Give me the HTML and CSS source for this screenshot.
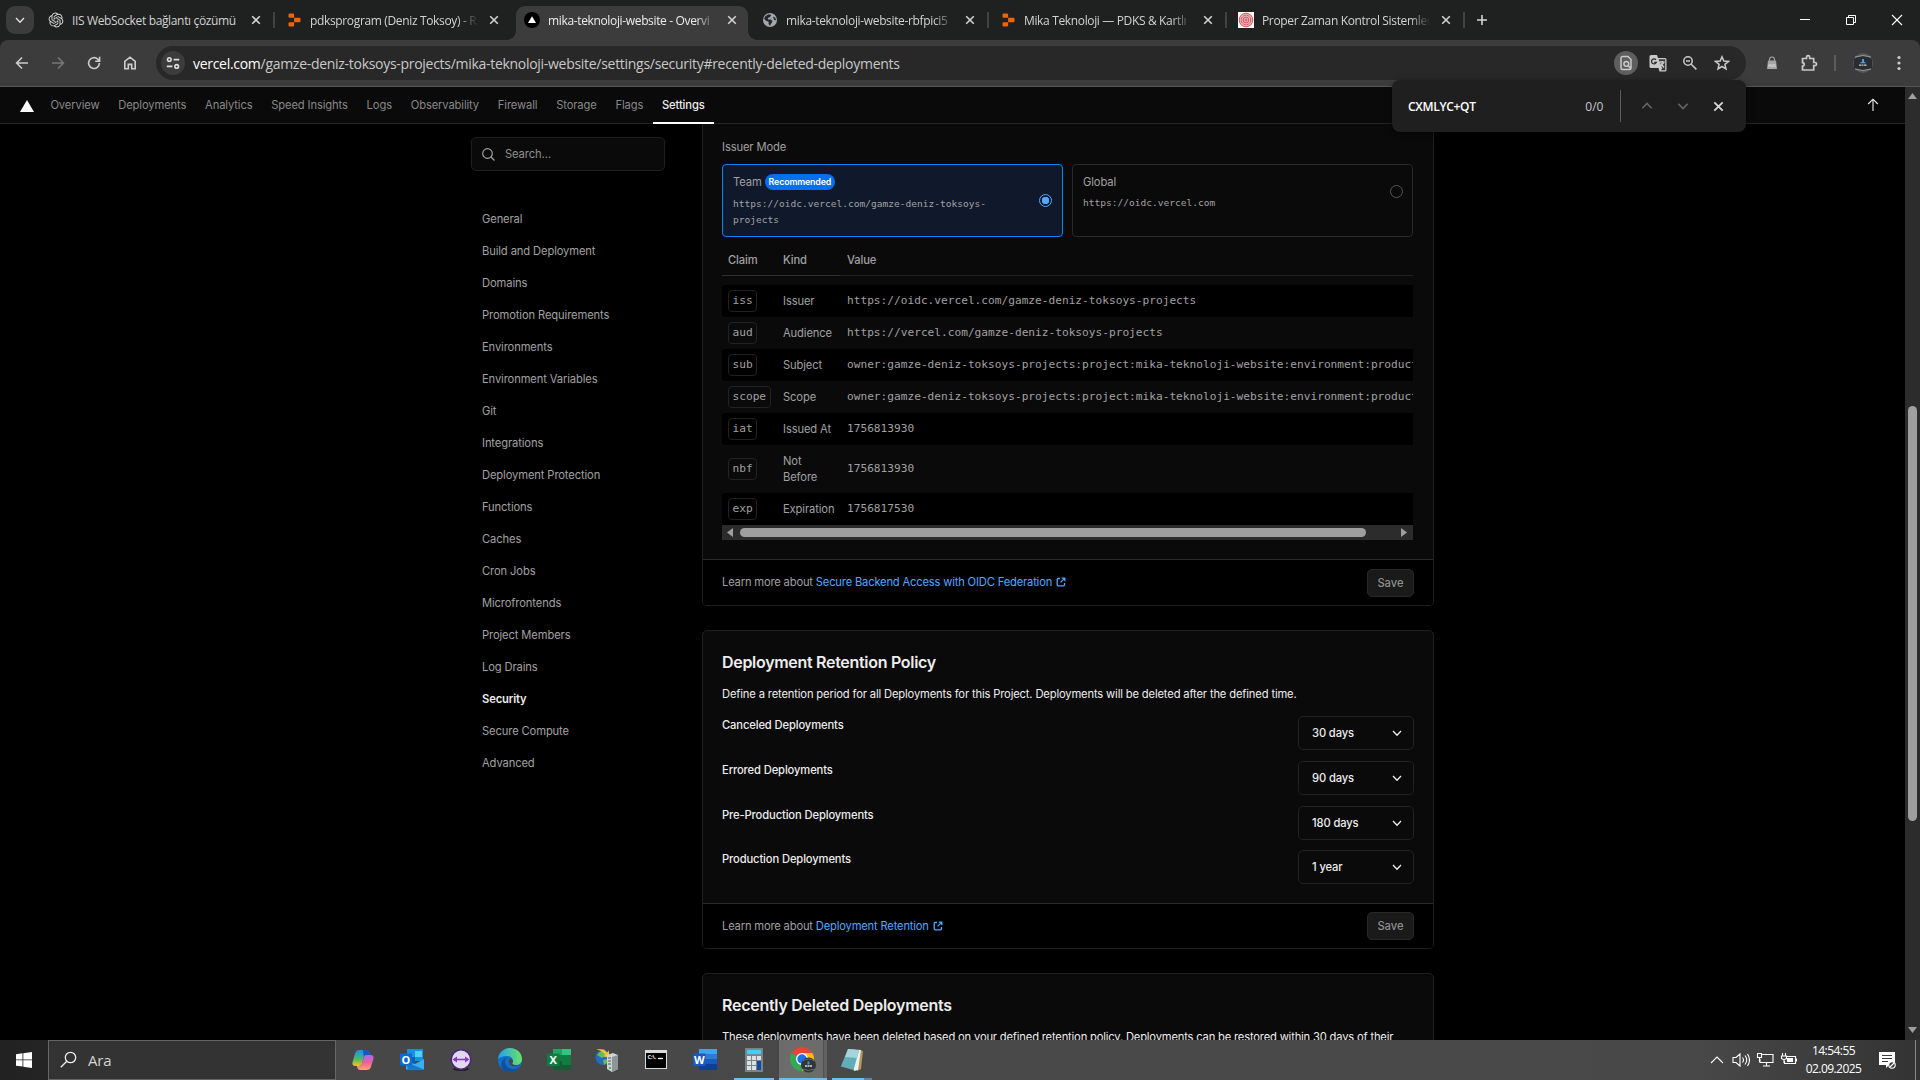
FILE: index.html
```html
<!DOCTYPE html>
<html lang="tr">
<head>
<meta charset="utf-8">
<title>mika-teknoloji-website - Overview</title>
<link rel="stylesheet" href="styles.css">
</head>
<body>
<svg class="defs" aria-hidden="true">
  <symbol id="close" viewBox="0 0 10 10"><path d="M1.2 1.2 8.8 8.8M8.8 1.2 1.2 8.8" fill="none" stroke="currentColor" stroke-width="1.6"/></symbol>
  <symbol id="chev" viewBox="0 0 12 12"><path d="M2 4 6 8.2 10 4" fill="none" stroke="currentColor" stroke-width="1.3"/></symbol>
  <symbol id="replit" viewBox="0 0 14 16"><path d="M2 1.5h3.6a1 1 0 0 1 1 1v3.2H2a1 1 0 0 1-1-1V2.5a1 1 0 0 1 1-1zM6.6 5.7h5.4a1 1 0 0 1 1 1v2.6a1 1 0 0 1-1 1H6.6zM2 10.3h4.6v3.2a1 1 0 0 1-1 1H2a1 1 0 0 1-1-1v-2.2a1 1 0 0 1 1-1z" fill="#f26207"/></symbol>
  <symbol id="ext" viewBox="0 0 10 10"><path d="M4 1.5H2.2a1 1 0 0 0-1 1v5.3a1 1 0 0 0 1 1h5.3a1 1 0 0 0 1-1V6M5.8 1.2h3v3M8.6 1.4 4.6 5.4" fill="none" stroke="currentColor" stroke-width="1.3"/></symbol>
</svg>

<header class="tabstrip">
  <button class="tab-search"><svg width="12" height="12"><use href="#chev"/></svg></button>
  <div class="tab">
    <svg class="fav" viewBox="-1 -1 26 26"><path fill="#d8d8d8" d="M22.2819 9.8211a5.9847 5.9847 0 0 0-.5157-4.9108 6.0462 6.0462 0 0 0-6.5098-2.9A6.0651 6.0651 0 0 0 4.9807 4.1818a5.9847 5.9847 0 0 0-3.9977 2.9 6.0462 6.0462 0 0 0 .7427 7.0966 5.98 5.98 0 0 0 .511 4.9107 6.051 6.051 0 0 0 6.5146 2.9001A5.9847 5.9847 0 0 0 13.2599 24a6.0557 6.0557 0 0 0 5.7718-4.2058 5.9894 5.9894 0 0 0 3.9977-2.9001 6.0557 6.0557 0 0 0-.7475-7.0729zm-9.022 12.6081a4.4755 4.4755 0 0 1-2.8764-1.0408l.1419-.0804 4.7783-2.7582a.7948.7948 0 0 0 .3927-.6813v-6.7369l2.02 1.1686a.071.071 0 0 1 .038.052v5.5826a4.504 4.504 0 0 1-4.4945 4.4944zm-9.6607-4.1254a4.4708 4.4708 0 0 1-.5346-3.0137l.142.0852 4.783 2.7582a.7712.7712 0 0 0 .7806 0l5.8428-3.3685v2.3324a.0804.0804 0 0 1-.0332.0615L9.74 19.9502a4.4992 4.4992 0 0 1-6.1408-1.6464zM2.3408 7.8956a4.485 4.485 0 0 1 2.3655-1.9728V11.6a.7664.7664 0 0 0 .3879.6765l5.8144 3.3543-2.0201 1.1685a.0757.0757 0 0 1-.071 0l-4.8303-2.7865A4.504 4.504 0 0 1 2.3408 7.872zm16.5963 3.8558L13.1038 8.364 15.1192 7.2a.0757.0757 0 0 1 .071 0l4.8303 2.7913a4.4944 4.4944 0 0 1-.6765 8.1042v-5.6772a.79.79 0 0 0-.407-.667zm2.0107-3.0231l-.142-.0852-4.7735-2.7818a.7759.7759 0 0 0-.7854 0L9.409 9.2297V6.8974a.0662.0662 0 0 1 .0284-.0615l4.8303-2.7866a4.4992 4.4992 0 0 1 6.6802 4.66zM8.3065 12.863l-2.02-1.1638a.0804.0804 0 0 1-.038-.0567V6.0742a4.4992 4.4992 0 0 1 7.3757-3.4537l-.142.0805L8.704 5.459a.7948.7948 0 0 0-.3927.6813zm1.0976-2.3654l2.602-1.4998 2.6069 1.4998v2.9994l-2.5974 1.4997-2.6067-1.4997Z"/></svg>
    <span class="tab-title t1">IIS WebSocket bağlantı çözümü</span><svg class="x"><use href="#close"/></svg>
  </div>
  <div class="tab nosep">
    <svg class="fav rep"><use href="#replit"/></svg>
    <span class="tab-title">pdksprogram (Deniz Toksoy) - R</span><svg class="x"><use href="#close"/></svg>
  </div>
  <div class="tab nosep active">
    <svg class="fav" viewBox="0 0 16 16"><circle cx="8" cy="8" r="8" fill="#000"/><path d="M8 4.2 12 11H4z" fill="#fff"/></svg>
    <span class="tab-title">mika-teknoloji-website - Overvi</span><svg class="x"><use href="#close"/></svg>
  </div>
  <div class="tab">
    <svg class="fav" viewBox="0 0 16 16"><circle cx="8" cy="8" r="7" fill="#a2a6ad"/><path d="M3 4.5 6.5 2.3 9.4 3 8 5 6 6v1.6h3l1.6 1.6L9.5 11 8 13.8 6.6 12V9.8L3.6 8.6 2.2 6.8zM11 4.6l2.4 1.2.6 2.4-2-.2z" fill="#26282b"/></svg>
    <span class="tab-title">mika-teknoloji-website-rbfpici5</span><svg class="x"><use href="#close"/></svg>
  </div>
  <div class="tab">
    <svg class="fav rep"><use href="#replit"/></svg>
    <span class="tab-title">Mika Teknoloji — PDKS &amp; Kartlı</span><svg class="x"><use href="#close"/></svg>
  </div>
  <div class="tab">
    <svg class="fav" viewBox="0 0 16 16"><path fill="#fff" d="M0 0h16v16H0z"/><circle cx="8" cy="8" r="6.8" fill="#eab6ba"/><g fill="none" stroke="#d6535f" stroke-width="1"><circle cx="8" cy="8" r="6.8"/><circle cx="8" cy="8" r="4.8" stroke-dasharray="3 .8"/><circle cx="8" cy="8" r="2.9"/><circle cx="8" cy="8" r="1"/></g></svg>
    <span class="tab-title">Proper Zaman Kontrol Sistemler</span><svg class="x"><use href="#close"/></svg>
  </div>
  <svg class="newtab" viewBox="0 0 12 12"><path d="M6 1v10M1 6h10" stroke="#d4d4d4" stroke-width="1.6"/></svg>
  <div class="window-controls">
    <svg viewBox="0 0 12 12"><path d="M1 5.5h10" stroke="#fff"/></svg>
    <svg viewBox="0 0 12 12"><path d="M1.5 3.5h7v7h-7zM3.5 3V1.5h7v7H9" fill="none" stroke="#fff"/></svg>
    <svg viewBox="0 0 12 12"><path d="M1 1l10 10M11 1 1 11" stroke="#fff" stroke-width="1.1"/></svg>
  </div>
</header>

<div class="toolbar">
  <nav class="nav-buttons">
    <svg viewBox="0 0 16 16"><path d="M14 8H3M8 2.5 2.6 8 8 13.5" /></svg>
    <svg viewBox="0 0 16 16" class="off"><path d="M2 8h11M8 2.5 13.4 8 8 13.5"/></svg>
    <svg viewBox="0 0 16 16"><path d="M13.4 8A5.4 5.4 0 1 1 11.8 4.2L13.4 6M13.6 1.8v4.4H9.2"/></svg>
    <svg viewBox="0 0 16 16"><path d="M2.8 6.4 8 2.2l5.2 4.2v7.4H9.7V9.4H6.3v4.4H2.8z"/></svg>
  </nav>
  <div class="omnibox">
    <span class="site-info"><svg viewBox="0 0 16 16" width="16" height="16" fill="none" stroke="#dedede" stroke-width="1.6"><circle cx="4.3" cy="4.6" r="1.8"/><path d="M8.6 4.6h5.6M1.8 11.4h5.6"/><circle cx="11.7" cy="11.4" r="1.8"/></svg></span>
    <span class="url"><b>vercel.com</b>/gamze-deniz-toksoys-projects/mika-teknoloji-website/settings/security#recently-deleted-deployments</span>
    <div class="omni-icons">
      <span class="round"><svg viewBox="0 0 16 16"><path d="M10 1.5H4.5a1.5 1.5 0 0 0-1.5 1.5v10A1.5 1.5 0 0 0 4.5 14.5h7A1.5 1.5 0 0 0 13 13V4.5zM10.3 10.8l2.2 2.4"/><circle cx="8.3" cy="8.8" r="2.4"/></svg></span>
      <svg viewBox="0 0 18 18" class="translate"><path fill="#c9c9c9" d="M2 1h6l1 3h7a1.5 1.5 0 0 1 1.5 1.5V16A1.5 1.5 0 0 1 16 17.5h-5.5L9.5 14H2A1.5 1.5 0 0 1 .5 12.5v-10A1.5 1.5 0 0 1 2 1z"/><path fill="#3a3a3a" d="M9.6 5.2H16.2v11H12l1.2-2z"/><path d="M7 5.8A2.5 2.5 0 1 0 7.4 8.3H5.2" fill="none" stroke="#282828" stroke-width="1.2"/><path d="M10.5 8h5M13 7v1.5M14.8 8.5 11.6 12M11.8 9.5l3.2 4" stroke="#c9c9c9" fill="none"/></svg>
      <svg viewBox="0 0 16 16"><circle cx="6" cy="6" r="4.2"/><path d="M9.2 9.2 14.4 14.4M4 6h4"/></svg>
      <svg viewBox="0 0 16 16"><path d="M8 1.8 9.8 6l4.7.4-3.6 3 1.1 4.6L8 11.5 4 14l1.1-4.6-3.600-3L6.2 6z"/></svg>
    </div>
  </div>
  <div class="extensions">
    <svg viewBox="0 0 12 14" class="lock"><path d="M3.500 4.500V3.500a2.500 2.500 0 0 1 5 0v1" fill="none" stroke="#a5a5a5" stroke-width="1.100"/><path d="M2 4.500h8l1 8.500H1z" fill="#a5a5a5"/><text x="6" y="10.500" text-anchor="middle" font-size="4" fill="#efefef">AVG</text></svg>
    <svg viewBox="0 0 18 18" class="puzzle"><path d="M2.500 4.500h4V3.200a1.600 1.600 0 0 1 3.200 0v1.300h4v4H15a1.600 1.600 0 0 1 0 3.200h-1.300v4.300H2.500v-4a1.700 1.700 0 0 0 0-3.400z" fill="none" stroke="#c9c9c9" stroke-width="1.700"/></svg>
    <i></i>
    <svg viewBox="0 0 20 20" class="avatar"><circle cx="10" cy="10" r="10" fill="#55585b"/><path d="M1 6Q10 0 19 6v9Q10 20 1 15z" fill="#292d31"/><path d="M2 4q8-3 16 0M2 16q8 3 16 0" stroke="#999" fill="none"/><path d="M9 6h2v3h1.500v1.300h-5V9H9z" fill="#4aa0dc"/><path d="M6 12.200h8" stroke="#ccc" stroke-width="1.300" stroke-dasharray="2 .5"/></svg>
    <svg viewBox="0 0 4 16" class="dots"><circle cx="2" cy="2.500" r="1.600"/><circle cx="2" cy="8" r="1.600"/><circle cx="2" cy="13.500" r="1.600"/></svg>
  </div>
</div>

<div class="viewport">
  <div class="page">
    <nav class="topnav">
      <svg class="logo" viewBox="0 0 14 12"><path d="M7 0 14 12H0z" fill="#fff"/></svg>
      <a>Overview</a><a>Deployments</a><a>Analytics</a><a>Speed Insights</a><a>Logs</a><a>Observability</a><a>Firewall</a><a>Storage</a><a>Flags</a><a class="current">Settings</a>
      <svg class="up" viewBox="0 0 12 14"><path d="M6 13V1.500M1.200 6 6 1.200 10.800 6" fill="none" stroke="#ededed" stroke-width="1.100"/></svg>
    </nav>
    <div class="content">
      <aside>
        <div class="search"><svg viewBox="0 0 13 13"><circle cx="5.500" cy="5.500" r="4.800"/><path d="m9 9 3.500 3.500"/></svg>Search…</div>
        <a>General</a><a>Build and Deployment</a><a>Domains</a><a>Promotion Requirements</a><a>Environments</a><a>Environment Variables</a><a>Git</a><a>Integrations</a><a>Deployment Protection</a><a>Functions</a><a>Caches</a><a>Cron Jobs</a><a>Microfrontends</a><a>Project Members</a><a>Log Drains</a><a class="current">Security</a><a>Secure Compute</a><a>Advanced</a>
      </aside>
      <main>
        <section class="card oidc">
          <div class="body">
            <div class="label">Issuer Mode</div>
            <div class="modes">
              <div class="mode on"><div><p>Team <span class="badge">Recommended</span></p><code>https://oidc.vercel.com/gamze-deniz-toksoys-<br>projects</code></div><i class="radio"></i></div>
              <div class="mode"><div><p>Global</p><code>https://oidc.vercel.com</code></div><i class="radio"></i></div>
            </div>
            <div class="claims">
              <div class="row head"><span>Claim</span><span>Kind</span><span>Value</span></div>
              <div class="row odd"><span><kbd>iss</kbd></span><span>Issuer</span><code>https://oidc.vercel.com/gamze-deniz-toksoys-projects</code></div>
              <div class="row"><span><kbd>aud</kbd></span><span>Audience</span><code>https://vercel.com/gamze-deniz-toksoys-projects</code></div>
              <div class="row odd"><span><kbd>sub</kbd></span><span>Subject</span><code>owner:gamze-deniz-toksoys-projects:project:mika-teknoloji-website:environment:product</code></div>
              <div class="row"><span><kbd>scope</kbd></span><span>Scope</span><code>owner:gamze-deniz-toksoys-projects:project:mika-teknoloji-website:environment:product</code></div>
              <div class="row odd"><span><kbd>iat</kbd></span><span>Issued At</span><code>1756813930</code></div>
              <div class="row tall"><span><kbd>nbf</kbd></span><span>Not<br>Before</span><code>1756813930</code></div>
              <div class="row odd"><span><kbd>exp</kbd></span><span>Expiration</span><code>1756817530</code></div>
              <div class="hscroll"><svg viewBox="0 0 6 9"><path d="M6 0v9L0 4.500z"/></svg><i></i><svg viewBox="0 0 6 9"><path d="M0 0v9l6-4.500z"/></svg></div>
            </div>
          </div>
          <footer><p>Learn more about <a>Secure Backend Access with OIDC Federation</a><svg><use href="#ext"/></svg></p><button>Save</button></footer>
        </section>
        <section class="card retention">
          <div class="body">
            <h2>Deployment Retention Policy</h2>
            <p class="desc">Define a retention period for all Deployments for this Project. Deployments will be deleted after the defined time.</p>
            <div class="policy"><b>Canceled Deployments</b><span class="select">30 days<svg><use href="#chev"/></svg></span></div>
            <div class="policy"><b>Errored Deployments</b><span class="select">90 days<svg><use href="#chev"/></svg></span></div>
            <div class="policy"><b>Pre-Production Deployments</b><span class="select">180 days<svg><use href="#chev"/></svg></span></div>
            <div class="policy"><b>Production Deployments</b><span class="select">1 year<svg><use href="#chev"/></svg></span></div>
          </div>
          <footer><p>Learn more about <a>Deployment Retention</a><svg><use href="#ext"/></svg></p><button>Save</button></footer>
        </section>
        <section class="card deleted">
          <div class="body">
            <h2>Recently Deleted Deployments</h2>
            <p class="desc">These deployments have been deleted based on your defined retention policy. Deployments can be restored within 30 days of their</p>
          </div>
        </section>
      </main>
    </div>
  </div>
  <div class="vscroll"><svg viewBox="0 0 9 6"><path d="M0 6h9L4.500 0z"/></svg><i></i><svg viewBox="0 0 9 6"><path d="M0 0h9L4.500 6z"/></svg></div>
</div>

<div class="findbar">
  <b>CXMLYC+QT</b><span>0/0</span><i></i>
  <svg class="dim flip"><use href="#chev"/></svg><svg class="dim"><use href="#chev"/></svg><svg><use href="#close"/></svg>
</div>

<footer class="taskbar">
  <div class="start"><svg viewBox="0 0 16 16" width="16" height="16"><path fill="#fff" d="M0 2.200 6.500 1.300V7.500H0zM7.300 1.200 16 0v7.500H7.300zM0 8.300h6.500v6.300L0 13.700zM7.300 8.300H16V16l-8.700-1.300z"/></svg></div>
  <div class="tsearch"><svg viewBox="0 0 17 17"><circle cx="10.500" cy="6.500" r="5.200"/><path d="M6.800 10.200.8 16.200"/></svg>Ara</div>
  <div class="apps">
    <span><svg viewBox="0 0 24 24"><defs><linearGradient id="c1" x1="0" y1="0" x2="0" y2="1"><stop offset="0" stop-color="#1c8ff0"/><stop offset=".55" stop-color="#49b86a"/><stop offset="1" stop-color="#f4c714"/></linearGradient><linearGradient id="c2" x1="0" y1="0" x2="0" y2="1"><stop offset="0" stop-color="#a56bee"/><stop offset=".5" stop-color="#ee5fa0"/><stop offset="1" stop-color="#fda65c"/></linearGradient></defs><path d="M8 2h7.500q2 0 2.700 2.200L19 7h-3.500q-2 0-2.600 2L11 15.500Q10.300 18 8 18H4.500Q.6 18 1.600 14L4 5.500Q5 2 8 2z" fill="url(#c1)"/><path d="M12 2h3.500q2 0 2.700 2.200L19 7h-3.500q-2 0-2.600 2z" fill="#1457c8"/><path d="M16 22H9q-2 0-2.600-2L5.800 18H8q2.300 0 3-2.500L13 9q.6-2 2.600-2h4q3.800 0 2.800 4l-2.500 8q-1 3-3.900 3z" fill="url(#c2)"/></svg></span>
    <span><svg viewBox="0 0 24 24"><path fill="#1a8fe0" d="M7 1h16v12H7z"/><path fill="#50d0ff" d="M15 3h7v6h-7z"/><path fill="#0a62b8" d="M7 9h8v8H7z"/><path fill="#38b0f0" d="M6 21.500V14l9 2 9-5v10.500z"/><path fill="#1278d0" d="M6 14l18 7.500H8z"/><path fill="#0b6ccd" d="M0 5.500h12v12H0z"/><text x="6" y="15.500" class="office">O</text></svg></span>
    <span><svg viewBox="0 0 24 24"><ellipse cx="12" cy="21" rx="8" ry="2" fill="#222"/><circle cx="12" cy="11.500" r="9.800" fill="#e1d9ed" stroke="#4a2b75" stroke-width="1.600"/><path d="M3.500 11.500 8 8.500v2.200h8V8.500l4.500 3-4.500 3v-2.200H8v2.200z" fill="#8a35c8"/></svg></span>
    <span><svg viewBox="0 0 24 24"><defs><linearGradient id="e1"><stop offset="0" stop-color="#22a0e8"/><stop offset="1" stop-color="#6be265"/></linearGradient></defs><circle cx="12" cy="12" r="12" fill="#0d70c9"/><path d="M0 11C1 4 6 0 12 0c7 0 12 5 12 11 0 4-3 6-6.500 6-3 0-4-1-3-2.300C15.800 12 14 8 9 8 4 8 1 10 0 11z" fill="url(#e1)"/><path d="M9 9.500C5 12 7 20 14 21c4 .5 7-1.500 8.300-4C19 25 10 26 5.500 22 1 18 4 10 9 9.500z" fill="#144f9b"/><path d="M12.500 10.500c-3 2-2 6 1.500 7.500 3 1 6 .3 8.500-1-4 1-9.500 0-8-2.500 1-1.500 0-3.500-2-4z" fill="#474747"/></svg></span>
    <span><svg viewBox="0 0 24 24"><path fill="#21a366" d="M6 1h18v7H6z"/><path fill="#33c481" d="M15 1h9v6h-9z"/><path fill="#107c41" d="M6 7h18v10H6z"/><path fill="#185c37" d="M6 13h18v9H6z"/><path fill="#107c41" d="M15 12h9v5h-9zM0 5.500h12.500V18H0z"/><text x="6.200" y="15.800" class="office">X</text></svg></span>
    <span><svg viewBox="0 0 24 24"><circle cx="8" cy="9.500" r="7.500" fill="#246bc4"/><path d="M2 7q4-5 7-4l1 4-3 3zM8 12l4-1v4l-3 2z" fill="#64bc54"/><path d="M1 1l8 .5 3 3 2-2v7L8 8.500 10 6.500 6 3z" fill="#f2c43c"/><path d="m12 7 6-2 5 2v14l-6 3-5-3z" fill="#cfd3d5"/><path d="m17 9 6-2v14l-6 3z" fill="#8f9597"/><path d="M13 10h3M13 13h3M13 16h3" stroke="#555"/><path d="M14 20h2" stroke="#49bd43" stroke-width="2"/></svg></span>
    <span><svg viewBox="0 0 24 24"><path fill="#dadada" d="M1 2h22v19H1z"/><path fill="#000" d="M2 5h20v15H2z"/><text x="3.500" y="11" font-size="5.500" font-weight="bold" fill="#fff">C:\.</text><path d="M14 10.500h5" stroke="#fff" stroke-width="1.300"/></svg></span>
    <span><svg viewBox="0 0 24 24"><path fill="#41a5ee" d="M6 1h18v6H6z"/><path fill="#2b7cd3" d="M6 6h18v6H6z"/><path fill="#185abd" d="M6 11h18v6H6z"/><path fill="#103f91" d="M6 16h18v6H6z"/><path fill="#185abd" d="M0 5.500h12.500V18H0z"/><text x="6.200" y="15.600" class="office">W</text></svg></span>
    <span class="open"><svg viewBox="0 0 24 24"><path fill="#7a8288" d="M3 0h18v24H3z"/><path fill="#41d0f4" d="M5 1.800h14v4.400H5z"/><path fill="#dce1e4" d="M5 8h4v4H5zM10 8h4v4h-4zM15 8h4v4h-4zM5 13h4v4H5zM10 13h4v4h-4zM5 18h4v4H5zM10 18h4v4h-4z"/><path fill="#0c4c9c" d="M15 13h4v9h-4z"/></svg></span>
    <span class="open chrome"><svg viewBox="0 0 26 26"><path d="M12 12 1.600 6A12 12 0 0 1 22.400 6z" fill="#ea4335"/><path d="M12 6h10.400A12 12 0 0 1 12 24z" fill="#fbbc04"/><path d="M12 12v12A12 12 0 0 1 1.600 6z" fill="#34a853"/><circle cx="12" cy="12" r="6" fill="#fff"/><circle cx="12" cy="12" r="4.700" fill="#1a73e8"/><circle cx="18.500" cy="18" r="7.500" fill="#30353a"/><path d="M12.500 14q6-4 12 0M12.500 22q6 3 12 0" stroke="#65696c" fill="none"/><path d="M17.500 14.500h2v3h-2z" fill="#448fc4"/><path d="M15 19h7" stroke="#ddd" stroke-width="1.300" stroke-dasharray="2 .5"/></svg></span>
    <span class="open stack"><svg viewBox="0 0 24 24"><path d="m20 2 3 1-2 18-4 2z" fill="#b69758"/><path d="m8 1 13 1-3 20-4 1z" fill="#e9f1f2"/><path d="M8 1 19 2.500 13.500 22 .8 18.500z" fill="#63adb9"/><path d="M8 1 19 2.500 17 10 5 9z" fill="#a5d4da"/></svg></span>
  </div>
  <div class="tray">
    <svg viewBox="0 0 14 16" class="w14"><path d="M1 11 7 5l6 6"/></svg>
    <svg viewBox="0 0 18 16" class="w18"><path d="M1 5.500h3L8 2v12l-4-3.500H1zM10.500 5.500q2 2.500 0 5M13 3.500q3.500 4.500 0 9M15.500 2q4 6 0 12"/></svg>
    <svg viewBox="0 0 18 16" class="w18"><path d="M6 2.500h11v8H4V7M10.500 10.500V14M7 14h7M1.500 1.500h4v4h-4zM3.500 5.500V10"/></svg>
    <svg viewBox="0 0 18 16" class="w18"><path d="M7 4.500h8.500v7H4.500V9M16.500 6.500v3M2.500 1v3M5.500 1v3M1.500 4h5v2.500q-2.500 2-5 0zM4 8v3"/><path d="M7.500 6.500h5v3h-5z" fill="#fff"/></svg>
    <div class="clock"><span>14:54:55</span><span>02.09.2025</span></div>
    <svg viewBox="0 0 18 18" class="action"><path fill="#fff" stroke="none" d="M1 1h16v13h-6l-3 3v-3H1z"/><path d="M4 4.500h10M4 7.500h10M4 10.500h6" stroke="#3c3c3c"/><circle cx="14" cy="14" r="3.200" fill="#3c3c3c"/><path d="m12 16 4-4"/></svg>
    <i></i>
  </div>
</footer>
</body>
</html>
```
FILE: styles.css
```css
* { box-sizing: border-box; margin: 0; padding: 0; }
body { width: 1920px; height: 1080px; overflow: hidden; background: #000; display: flex; flex-direction: column; font-family: Inter, "Liberation Sans", sans-serif; font-size: 11.2px; color: #a1a1a1; }
button { font: inherit; border: 0; }
svg { flex: none; display: block; }
.defs { position: absolute; width: 0; height: 0; }
code, kbd { font-family: "DejaVu Sans Mono", monospace; letter-spacing: 0; }

/* browser tabs */
.tabstrip { height: 40px; flex: none; display: flex; align-items: center; background: #1f2120; padding-left: 6px; font: 12px "Open Sans", sans-serif; color: #d2d2d2; }
.tab-search { width: 28px; height: 28px; border-radius: 9px; background: #3c3c3c; color: #e4e4e4; display: flex; align-items: center; justify-content: center; margin-right: 3px; }
.tab { width: 238px; height: 34px; display: flex; align-items: center; padding-left: 11px; position: relative; }
.tab::after { content: ""; position: absolute; right: 0; top: 9px; width: 2px; height: 16px; background: #414342; }
.tab.nosep::after { display: none; }
.fav { width: 16px; height: 16px; margin-right: 8px; }
.rep { padding-left: 1px; }
.tab-title { width: 168px; overflow: hidden; white-space: nowrap; height: 20px; line-height: 20px; letter-spacing: -.35px; margin-top: 1px; -webkit-mask-image: linear-gradient(90deg, #000 148px, transparent 168px); mask-image: linear-gradient(90deg, #000 148px, transparent 168px); }
.t1 { -webkit-mask-image: none; mask-image: none; }
.x { width: 10px; height: 10px; margin-left: 11px; color: #d2d2d2; }
.active { background: #3c3c3c; border-radius: 9px 9px 0 0; width: 232px; height: 34px; margin: 6px 3px 0 3px; align-self: flex-end; padding: 0 0 6px 8px; color: #ececec; }
.active::before { content: ""; position: absolute; left: -9px; right: -9px; bottom: 0; height: 9px; background: radial-gradient(circle at 0 0, transparent 8.500px, #3c3c3c 9px) left / 9px 9px no-repeat, radial-gradient(circle at 100% 0, transparent 8.500px, #3c3c3c 9px) right / 9px 9px no-repeat; }
.newtab { width: 12px; height: 12px; margin-left: 11px; }
.window-controls { margin-left: auto; display: flex; gap: 34px; padding-right: 17px; }
.window-controls svg { width: 12px; height: 12px; }

/* browser toolbar */
.toolbar { height: 47px; flex: none; background: #3c3c3c; border-bottom: 1px solid #555; border-radius: 8px 8px 0 0; display: flex; align-items: center; box-shadow: 0 -8px #1f2120; clip-path: inset(0); padding-left: 14px; }
.nav-buttons { display: flex; gap: 20px; }
.nav-buttons svg { width: 16px; height: 16px; fill: none; stroke: #cdcdcd; stroke-width: 1.600; }
.nav-buttons .off { stroke: #777; }
.omnibox { width: 1590px; height: 34px; border-radius: 17px; background: #282828; margin-left: 18px; display: flex; align-items: center; padding-left: 5px; }
.site-info, .round { width: 24px; height: 24px; border-radius: 50%; background: #3c3c3c; display: flex; align-items: center; justify-content: center; }
.url { margin-left: 8px; font: 14px "Open Sans", sans-serif; letter-spacing: -.29px; color: #c8c8c8; white-space: nowrap; }
.url b { font-weight: 400; color: #fff; }
.omni-icons { margin-left: auto; padding-right: 16px; display: flex; align-items: center; gap: 16px; }
.omni-icons svg { width: 16px; height: 16px; fill: none; stroke: #c9c9c9; stroke-width: 1.500; }
.omni-icons .translate { width: 18px; height: 18px; stroke: none; margin-left: -5px; margin-right: -1px; }
.round { background: #5e5e5e; }
.extensions { display: flex; align-items: center; flex: 1; padding-left: 20px; }
.lock { width: 12px; height: 14px; }
.puzzle { width: 18px; height: 18px; margin-left: 22px; }
.extensions i { width: 2px; height: 16px; background: #5c5c5c; margin-left: 16px; }
.avatar { width: 20px; height: 20px; margin-left: 17px; }
.dots { width: 4px; height: 16px; fill: #cdcdcd; margin-left: 24px; }

/* page area */
.viewport { height: 953px; flex: none; display: flex; }
.page { width: 1905px; overflow: hidden; display: flex; flex-direction: column; letter-spacing: -.12px; }
.topnav { height: 37px; flex: none; background: #0a0a0a; border-bottom: 1px solid #242424; display: flex; align-items: center; padding-left: 20px; color: #888; }
.logo { width: 14px; height: 12px; margin-right: 7px; margin-top: 2px; }
.topnav a { height: 37px; padding: 0 9.350px 0 9.450px; line-height: 37px; }
.topnav .current { color: #ededed; font-weight: 500; box-shadow: inset 0 -2px #fff; }
.up { width: 12px; height: 14px; margin-left: auto; margin-right: 26px; }
.content { display: flex; padding-left: 471px; }
aside { width: 194px; padding-top: 13px; display: flex; flex-direction: column; flex: none; }
.search { height: 34px; border: 1px solid #1f1f1f; border-radius: 5px; background: #0a0a0a; color: #8f8f8f; display: flex; align-items: center; gap: 10px; padding-left: 10px; margin-bottom: 32px; }
.search svg { width: 13px; height: 13px; fill: none; stroke: #a1a1a1; stroke-width: 1.200; }
aside a { height: 32px; line-height: 32px; padding-left: 11px; }
aside .current { color: #ededed; font-weight: 600; }
main { width: 732px; margin-left: 37px; flex: none; }
.card { border: 1px solid #1f1f1f; border-radius: 5px; background: #0a0a0a; overflow: hidden; margin-bottom: 24px; }
.card .body { padding: 0 19px; }
.oidc { border-top: 0; border-radius: 0 0 5px 5px; }
.oidc .body { height: 435px; padding-top: 15px; padding-right: 20px; }
.label { height: 16px; line-height: 16px; }
.modes { display: grid; grid-template-columns: 1fr 1fr; gap: 9px; margin-top: 9px; }
.mode { height: 73px; border: 1px solid #2a2a2a; border-radius: 4px; padding: 8px 10px; display: flex; justify-content: space-between; }
.mode p { line-height: 16px; height: 18px; display: flex; align-items: center; gap: 3px; }
.mode code { font-size: 9.550px; line-height: 16px; display: block; margin-top: 4px; }
.mode.on { background: #10192c; border-color: #0a85f5; }
.mode.on code { margin-top: 5px; }
.badge { height: 16px; border-radius: 8px; background: #0070f3; color: #fff; font-weight: 600; font-size: 8.800px; padding: 0 4px; line-height: 16px; }
.radio { width: 13px; height: 13px; border: 1px solid #555; border-radius: 50%; margin: 12px -1px 0 0; }
.on .radio { border-color: #52a8ff; background: radial-gradient(circle, #52a8ff 3.500px, transparent 4px); margin: 21px 0 0; }
.claims { overflow: hidden; padding-top: 7px; }
.row { height: 32px; display: grid; grid-template-columns: 55px 64px 1fr; align-items: center; padding-left: 6px; white-space: nowrap; line-height: 16px; border-radius: 3px 0 0 3px; }
.row code { font-size: 11.160px; overflow: hidden; }
.odd { background: #000; }
.tall { height: 48px; }
.head { font-weight: 500; border-radius: 0; border-bottom: 1px solid; border-image: linear-gradient(90deg, #303030 119px, #212121 119px) 1; margin-bottom: 9px; }
kbd { display: inline-block; height: 22px; line-height: 20px; border: 1px solid #222; border-radius: 4px; padding: 0 3.500px; font-size: 11.160px; vertical-align: middle; }
.hscroll { height: 15px; background: #2c2c2c; display: flex; align-items: center; padding: 0 6px 0 5px; }
.hscroll svg { width: 6px; height: 9px; fill: #9f9f9f; }
.hscroll i { width: 626px; height: 9px; border-radius: 5px; background: #9f9f9f; margin-left: 7px; margin-right: auto; }
.card footer { background: #000; border-top: 1px solid #2a2a2a; height: 46px; padding: 0 19px; display: flex; align-items: center; justify-content: space-between; letter-spacing: -.18px; }
.card footer p { display: flex; align-items: center; white-space: pre; padding-bottom: 1px; }
.card footer a, .card footer p svg { color: #52a8ff; }
.card footer p svg { width: 10px; height: 10px; margin-left: 4px; }
.card footer button { width: 47px; height: 28px; border-radius: 5px; background: #1a1a1a; border: 1px solid #292929; color: #8f8f8f; font-weight: 500; }
h2 { font-size: 16px; font-weight: 600; line-height: 26px; color: #ededed; letter-spacing: -.3px; }
.desc { color: #ededed; line-height: 19px; white-space: nowrap; letter-spacing: -.15px; }
.retention .body { height: 272px; padding-top: 18px; }
.retention .desc { margin: 10px 0 12px; }
.policy { height: 44.800px; display: flex; justify-content: space-between; color: #ededed; }
.policy b { font-weight: 500; line-height: 18px; }
.select { width: 116px; height: 34px; border: 1px solid #222; border-radius: 5px; padding: 0 10px 0 13px; display: flex; align-items: center; justify-content: space-between; font-weight: 500; }
.select svg { width: 12px; height: 12px; }
.retention footer { height: 45px; }
.deleted .body { height: 120px; padding-top: 18px; }
.deleted .desc { margin-top: 10px; letter-spacing: -.18px; }
.deleted h2 { letter-spacing: -.27px; }
.vscroll { width: 15px; background: #2c2c2c; display: flex; flex-direction: column; align-items: center; padding: 6px 0 7px; }
.vscroll svg { width: 9px; height: 6px; fill: #9f9f9f; }
.vscroll i { width: 9px; height: 415px; border-radius: 5px; background: #9f9f9f; margin-top: 307px; margin-bottom: auto; }

/* find overlay */
.findbar { position: absolute; left: 1392px; top: 80px; width: 354px; height: 52px; background: #1f1f1f; border-radius: 8px; box-shadow: 0 2px 6px rgba(0,0,0,.5); display: flex; align-items: center; padding-left: 16px; font: 12px "Open Sans", sans-serif; color: #c8c8c8; }
.findbar b { color: #fff; font-weight: 600; width: 179px; letter-spacing: -.3px; }
.findbar span { width: 34px; }
.findbar i { width: 1px; height: 32px; background: #5c5c5c; margin-right: 19px; margin-left: 1px; }
.findbar svg { width: 14px; height: 14px; margin-right: 22px; }
.findbar svg:last-child { width: 11px; height: 11px; margin-left: 1px; color: #d8d8d8; }
.findbar .dim { color: #666; }
.findbar .flip { transform: rotate(180deg); }

/* desktop taskbar */
.taskbar { height: 40px; flex: none; display: flex; background: linear-gradient(90deg, #222 0, #242424 48px, #474747 330px, #494949 1000px, #484848 1700px, #333 1920px); font-family: "Open Sans", sans-serif; }
.start { width: 48px; display: flex; align-items: center; justify-content: center; }
.tsearch { width: 288px; border: 1px solid #666; background: #333; display: flex; align-items: center; gap: 11px; padding-left: 11px; font-size: 15px; letter-spacing: -.2px; color: #d2d2d2; }
.tsearch svg { width: 17px; height: 17px; fill: none; stroke: #eee; stroke-width: 1.300; margin-top: -2px; }
.apps { display: flex; padding-left: 3px; gap: .9px; }
.apps span { width: 48px; height: 40px; display: flex; align-items: center; justify-content: center; }
.apps svg { width: 24px; height: 24px; }
.office { font: bold 11px "Open Sans", sans-serif; fill: #fff; text-anchor: middle; }
.apps .open { background: linear-gradient(#76b9ed, #76b9ed) 4px 38px / 40px 2px no-repeat; }
.apps .chrome { background: linear-gradient(#76b9ed, #76b9ed) 0 38px / 48px 2px no-repeat, linear-gradient(90deg, #6c6c6c 44px, #525252 44px, #525252 45px, #606060 45px); }
.apps .chrome svg { width: 26px; height: 26px; }
.apps .stack { background: linear-gradient(90deg, #76b9ed 32px, #5687ad 32px) 4px 38px / 40px 2px no-repeat; }
.tray { margin-left: auto; display: flex; align-items: center; }
.tray svg { fill: none; stroke: #fff; stroke-width: 1.100; }
.w14 { width: 14px; height: 16px; margin-right: 8px; }
.w18 { width: 18px; height: 16px; margin-right: 6px; }
.clock { width: 56px; display: flex; flex-direction: column; align-items: center; font-size: 12px; line-height: 18px; color: #fff; white-space: nowrap; letter-spacing: -.55px; padding-left: 3px; }
.action { width: 18px; height: 18px; margin-left: 18px; }
.tray i { width: 1px; height: 40px; background: #888; margin: 0 4px 0 19px; }
```
